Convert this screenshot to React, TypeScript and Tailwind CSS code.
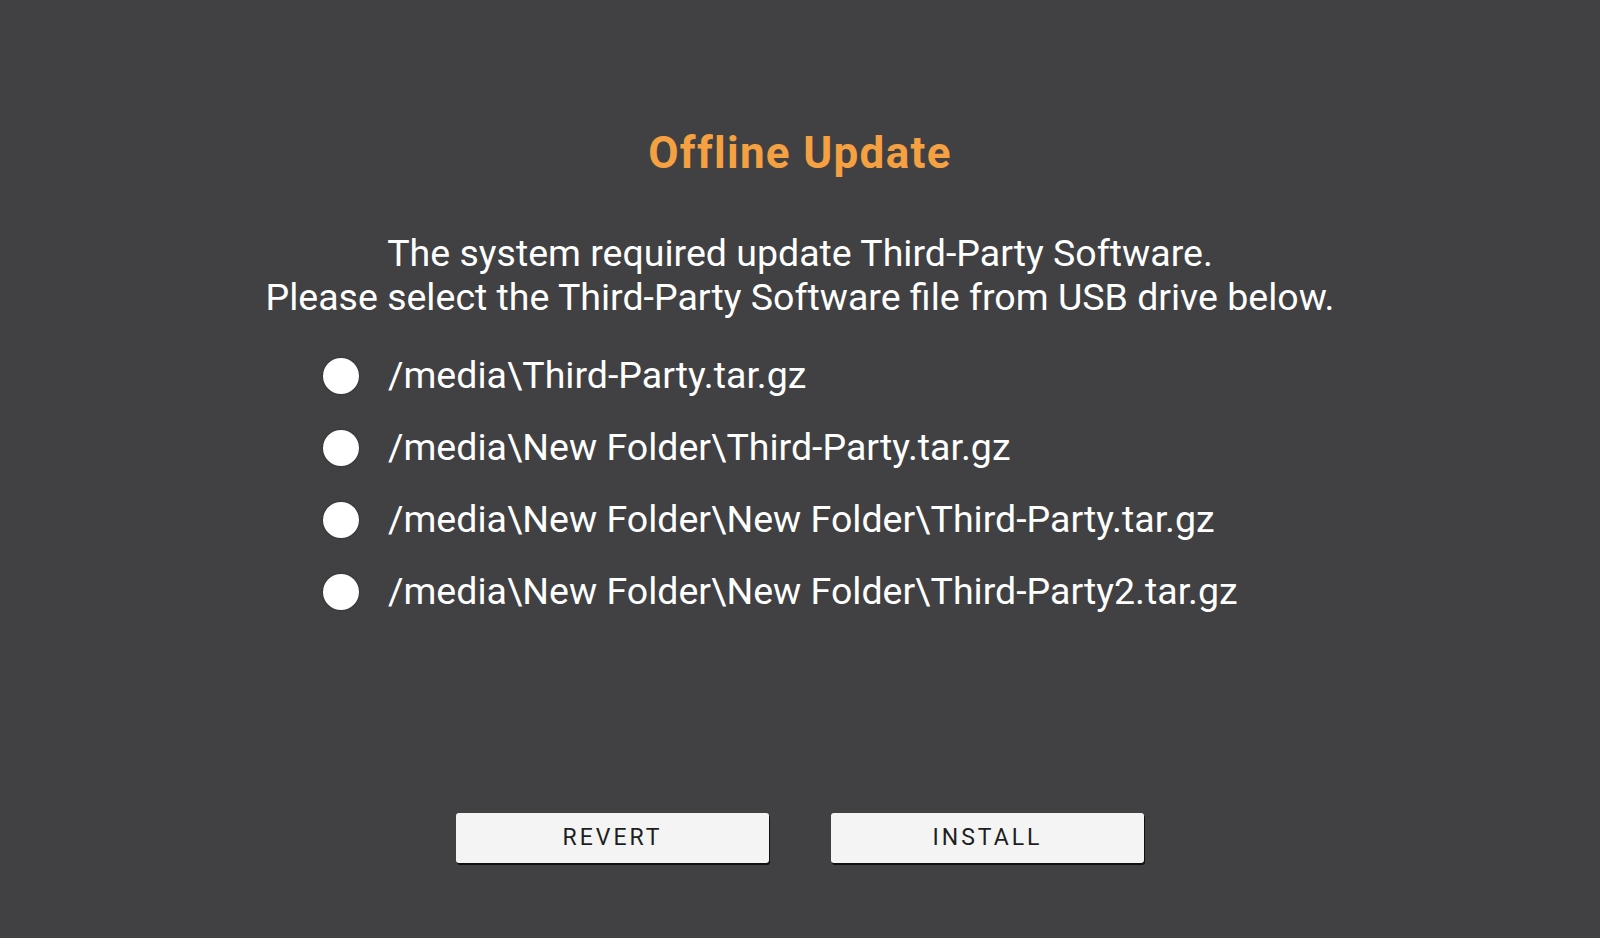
const FILES = [
  "/media\\Third-Party.tar.gz",
  "/media\\New Folder\\Third-Party.tar.gz",
  "/media\\New Folder\\New Folder\\Third-Party.tar.gz",
  "/media\\New Folder\\New Folder\\Third-Party2.tar.gz",
];

export default function App() {
  return (
    <div className="flex h-[938px] w-full flex-col bg-[#414143] pt-[128px] font-['Roboto',sans-serif] text-white">
      <h1 className="text-center text-[44px] leading-[50px] font-bold tracking-[0.03em] text-[#f5a142]">
        Offline Update
      </h1>

      <p className="mt-[53px] text-center text-[37.5px] leading-[44px]">
        The system required update Third-Party Software.
        <br />
        Please select the Third-Party Software file from USB drive below.
      </p>

      <ul className="mx-auto mt-[21px] w-[954px]">
        {FILES.map((file) => (
          <li key={file} className="flex h-[72px] items-center">
            <span className="h-[36px] w-[36px] shrink-0 rounded-full bg-white shadow-[0_0_2px_rgba(0,0,0,0.5)]" />
            <span className="ml-[29px] text-[37.5px] leading-none">{file}</span>
          </li>
        ))}
      </ul>

      <div className="mt-[185px] flex justify-center gap-[62px]">
        <ActionButton label="REVERT" />
        <ActionButton label="INSTALL" />
      </div>
    </div>
  );
}

function ActionButton({ label }: { label: string }) {
  return (
    <button
      type="button"
      className="h-[50px] w-[313px] rounded-[3px] bg-[#f4f4f4] text-[23px] tracking-[0.13em] text-[#1e1e1e] shadow-[1px_2px_0_#111]"
    >
      {label}
    </button>
  );
}
